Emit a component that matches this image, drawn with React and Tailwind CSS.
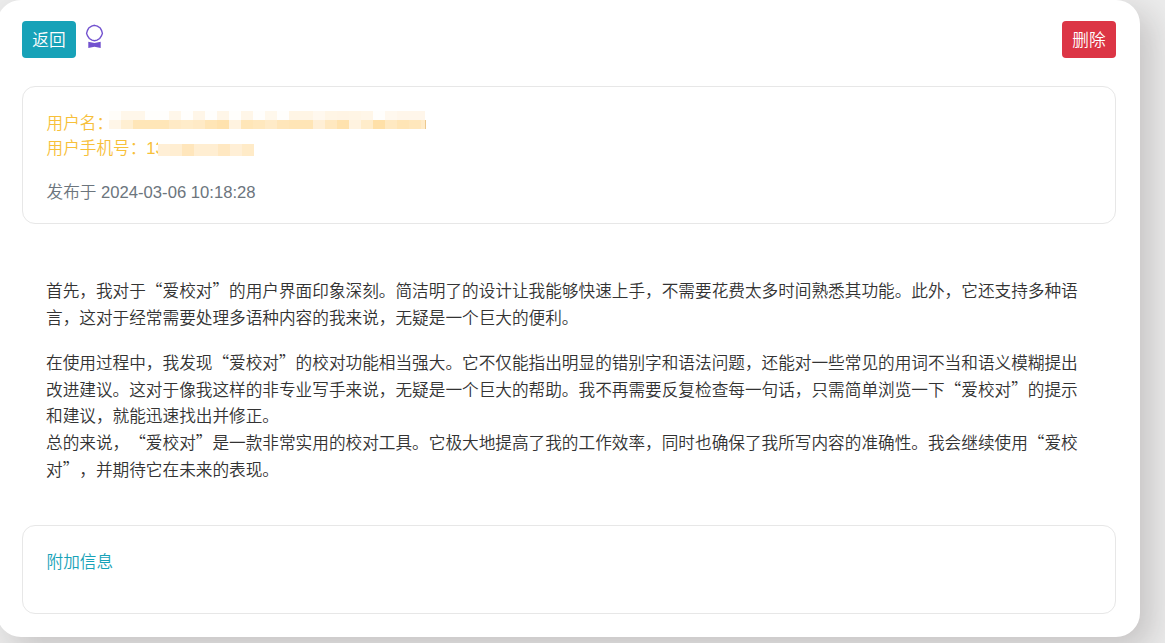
import clsx from 'clsx';

const NAME_TOP = [
  'bg-[#fffdf9]', 'bg-[#fff7ea]', 'bg-[#fff7ea]', 'bg-[#fffefc]', 'bg-[#fffefc]', 'bg-[#fff7ea]', 'bg-[#fffefc]',
  'bg-[#fff6e8]', 'bg-[#fffefc]', 'bg-[#fff6e8]', 'bg-[#fffefc]', 'bg-[#fff6e8]', 'bg-[#fffefc]', 'bg-[#fff8ec]',
  'bg-[#fffefc]', 'bg-[#fff5e5]', 'bg-[#fff5e5]', 'bg-[#fff8ee]', 'bg-[#fff5e5]', 'bg-[#fff4e4]', 'bg-[#fff5e5]',
  'bg-[#fff6e8]', 'bg-[#fffefc]', 'bg-[#fff8ee]', 'bg-[#fff6ea]', 'bg-[#fff6ea]', 'bg-[#fff6ea]',
];

const NAME_BOTTOM = [
  'bg-[#fff6e8]', 'bg-[#ffefd2]', 'bg-[#ffe6b8]', 'bg-[#ffe6b8]', 'bg-[#ffe6b8]', 'bg-[#ffeac6]', 'bg-[#ffecca]',
  'bg-[#ffeac6]', 'bg-[#ffe5b6]', 'bg-[#ffe2ae]', 'bg-[#fff3e0]', 'bg-[#ffe6b8]', 'bg-[#ffe8be]', 'bg-[#ffebc8]',
  'bg-[#ffe6ba]', 'bg-[#ffe5b6]', 'bg-[#ffe5b6]', 'bg-[#ffefd6]', 'bg-[#ffe8c0]', 'bg-[#ffe2ae]', 'bg-[#fff3e0]',
  'bg-[#ffecca]', 'bg-[#ffe0a8]', 'bg-[#ffe9c2]', 'bg-[#ffe5b6]', 'bg-[#ffe7bc]', 'bg-[#ffebc8]',
];

const PHONE = [
  'bg-[#ffefd6]', 'bg-[#ffeed2]', 'bg-[#ffe6bc]', 'bg-[#ffeed2]', 'bg-[#ffeed2]', 'bg-[#ffe8c2]', 'bg-[#ffefd6]', 'bg-[#ffebc8]',
];

function MaskRow({ cells, className }) {
  return (
    <div className={clsx('flex', className)}>
      {cells.map((color, i) => (
        <span key={i} className={clsx('h-full w-3 shrink-0', color)} />
      ))}
    </div>
  );
}

function BadgeIcon() {
  return (
    <svg className="mt-[3px] ml-[9px] h-[25px] w-[19px]" viewBox="0 0 19 25" fill="none">
      <path
        d="M9.5 1.3 12.4 2.1 15.2 4 16.6 6.6 17.4 9.4 16.4 12 14.7 14.5 12 16.2 9.5 16.8 7 16.2 4.3 14.5 2.6 12 1.6 9.4 2.4 6.6 3.8 4 6.6 2.1Z"
        stroke="#7252cf"
        strokeWidth="1.4"
      />
      <path d="M3.3 17.8 9.5 19 15.7 17.8V24L9.5 22.8 3.3 24Z" fill="#7252cf" />
    </svg>
  );
}

export default function App() {
  return (
    <div
      lang="zh-CN"
      className="h-[643px] w-[1165px] overflow-hidden bg-[#ebebeb] font-['Liberation_Sans','Noto_Sans_CJK_SC',sans-serif] text-[16.65px] leading-[25px] font-[350] [text-spacing-trim:space-all]"
    >
      <div className="-ml-[3px] h-[637px] w-[1143px] rounded-[24px] bg-white pt-[21px] pr-6 pl-[25px] shadow-[12px_12px_30px_rgba(40,30,30,0.18)]">
        <div className="flex h-[37px] items-start">
          <button className="h-[37px] w-[54px] rounded-[4px] bg-[#17a2b8] pt-px text-white">返回</button>
          <BadgeIcon />
          <button className="ml-auto h-[37px] w-[54px] rounded-[4px] bg-[#dc3545] pt-px text-white">删除</button>
        </div>

        <section className="mt-7 h-[138px] rounded-[13px] border border-[#e7e7e7] px-[23.5px] pt-6">
          <div className="flex h-[25px] text-[#f7c03a]">
            <span className="w-[67px] shrink-0 whitespace-nowrap">用户名：</span>
            <div className="-ml-[5px] flex w-[316px] flex-col overflow-hidden">
              <MaskRow cells={NAME_TOP} className="h-[9px]" />
              <MaskRow cells={NAME_BOTTOM} className="h-[9px]" />
            </div>
            <span className="mt-[9px] h-[9px] w-px bg-[#ecc88e]" />
          </div>
          <div className="flex h-[25px] text-[#f7c03a]">
            <span className="shrink-0 whitespace-nowrap">用户手机号：13</span>
            <div className="-ml-[7px] h-5 bg-white pt-[8px]">
              <MaskRow cells={PHONE} className="h-3" />
            </div>
          </div>
          <p className="mt-[19px] text-[#6c757d]">发布于 2024-03-06 10:18:28</p>
        </section>

        <article className="mt-[53px] h-[248px] pl-6 font-['Noto_Sans_CJK_SC',sans-serif] leading-[26.6px] whitespace-nowrap text-[#333]">
          <p>
            首先，我对于“爱校对”的用户界面印象深刻。简洁明了的设计让我能够快速上手，不需要花费太多时间熟悉其功能。此外，它还支持多种语
            <br />
            言，这对于经常需要处理多语种内容的我来说，无疑是一个巨大的便利。
          </p>
          <p className="mt-[19px]">
            在使用过程中，我发现“爱校对”的校对功能相当强大。它不仅能指出明显的错别字和语法问题，还能对一些常见的用词不当和语义模糊提出
            <br />
            改进建议。这对于像我这样的非专业写手来说，无疑是一个巨大的帮助。我不再需要反复检查每一句话，只需简单浏览一下“爱校对”的提示
            <br />
            和建议，就能迅速找出并修正。
            <br />
            总的来说，“爱校对”是一款非常实用的校对工具。它极大地提高了我的工作效率，同时也确保了我所写内容的准确性。我会继续使用“爱校
            <br />
            对”，并期待它在未来的表现。
          </p>
        </article>

        <section className="h-[89px] rounded-[13px] border border-[#e7e7e7] px-[23.5px] pt-6 text-[#17a2b8]">
          附加信息
        </section>
      </div>
    </div>
  );
}
